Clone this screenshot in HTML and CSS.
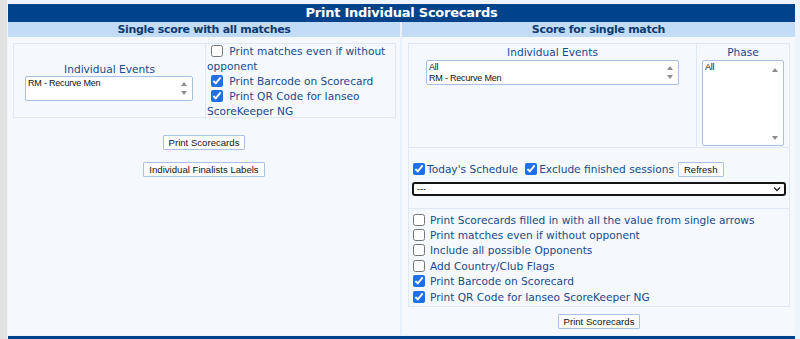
FILE: index.html
```html
<!DOCTYPE html>
<html>
<head>
<meta charset="utf-8">
<title>Print Individual Scorecards</title>
<link rel="stylesheet" href="styles.css">
</head>
<body>
<div class="page">
  <div class="strip"></div>
  <div class="main">
    <div class="title">Print Individual Scorecards</div>
    <div class="cols">
      <div class="col">
        <div class="subhead">Single score with all matches</div>
        <div class="body">
          <div class="box box-left">
            <div class="cell cell-events">
              <div class="lbl">Individual Events</div>
              <div class="listbox lb-left">
                <div class="opt">RM - Recurve Men</div>
                <span class="arr up"></span><span class="arr down"></span>
              </div>
            </div>
            <div class="cell cell-opts">
              <label class="chk"><input type="checkbox"> Print matches even if without opponent</label>
              <label class="chk"><input type="checkbox" checked> Print Barcode on Scorecard</label>
              <label class="chk"><input type="checkbox" checked> Print QR Code for Ianseo ScoreKeeper NG</label>
            </div>
          </div>
          <div class="btnrow first"><button class="btn">Print Scorecards</button></div>
          <div class="btnrow second"><button class="btn">Individual Finalists Labels</button></div>
        </div>
      </div>
      <div class="col">
        <div class="subhead">Score for single match</div>
        <div class="body">
          <div class="box box-right">
            <div class="cell cell-ev2">
              <div class="lbl lbl-top">Individual Events</div>
              <div class="listbox lb-ev2">
                <div class="opt">All</div>
                <div class="opt">RM - Recurve Men</div>
                <span class="arr up"></span><span class="arr down"></span>
              </div>
            </div>
            <div class="cell cell-phase">
              <div class="lbl lbl-top">Phase</div>
              <div class="listbox lb-phase">
                <div class="opt">All</div>
                <span class="arr up"></span><span class="arr down"></span>
              </div>
            </div>
            <div class="cell row-sched">
              <div class="sched-line">
                <label class="chk2"><input type="checkbox" checked>Today's Schedule</label>
                <label class="chk2"><input type="checkbox" checked>Exclude finished sessions</label>
                <button class="btn">Refresh</button>
              </div>
              <div class="dropdown"><span>---</span>
                <svg class="chev" width="8" height="6" viewBox="0 0 8 6"><path d="M1 1.5 L4 4.5 L7 1.5" fill="none" stroke="#222" stroke-width="1.3"/></svg>
              </div>
            </div>
            <div class="cell row-opts">
              <label class="opt-line"><input type="checkbox">Print Scorecards filled in with all the value from single arrows</label>
              <label class="opt-line"><input type="checkbox">Print matches even if without opponent</label>
              <label class="opt-line"><input type="checkbox">Include all possible Opponents</label>
              <label class="opt-line"><input type="checkbox">Add Country/Club Flags</label>
              <label class="opt-line"><input type="checkbox" checked>Print Barcode on Scorecard</label>
              <label class="opt-line"><input type="checkbox" checked>Print QR Code for Ianseo ScoreKeeper NG</label>
            </div>
          </div>
          <div class="btnrow right"><button class="btn">Print Scorecards</button></div>
        </div>
      </div>
    </div>
    <div class="footer-bar"></div>
  </div>
</div>
</body>
</html>
```
FILE: styles.css
```css
html, body {
  margin: 0;
  padding: 0;
}
body {
  background: #eef4fb;
  font-family: "DejaVu Sans", Verdana, sans-serif;
  color: #184a8c;
  height: 339px;
  overflow: hidden;
}
.page {
  display: flex;
  height: 339px;
}
.strip {
  width: 7px;
  flex: none;
  background: #e2e2e2;
  border-right: 1px solid #f1f3f5;
}
.main {
  width: 787px;
  padding-top: 4px;
  display: flex;
  flex-direction: column;
}
.title {
  background: #00438a;
  color: #ffffff;
  font-weight: bold;
  font-size: 13px;
  letter-spacing: -0.25px;
  height: 18px;
  line-height: 18px;
  text-align: center;
}
.cols {
  display: grid;
  grid-template-columns: 392px 393px;
  column-gap: 2px;
  background: #e9f2fc;
}
.col {
  display: flex;
  flex-direction: column;
}
.subhead {
  background: #c2dbf7;
  color: #0c3a70;
  font-weight: bold;
  font-size: 11px;
  letter-spacing: -0.3px;
  height: 15px;
  line-height: 15px;
  text-align: center;
}
.body {
  background: #f5f9fe;
  height: 298px;
  padding: 6px 5px 0 5px;
  box-sizing: border-box;
}
.col + .col .body {
  padding: 6px 5px 0 6px;
}
.box {
  border: 1px solid #dfe9f5;
  display: grid;
}
.box-left {
  grid-template-columns: 191px 1fr;
  height: 75px;
  box-sizing: border-box;
  margin-right: -1px;
}
.cell {
  box-sizing: border-box;
}
.cell-events {
  display: flex;
  flex-direction: column;
  align-items: center;
  justify-content: center;
  padding-top: 0;
}
.lbl {
  font-size: 10.6px;
  line-height: 13px;
}
.cell-opts {
  border-left: 1px solid #dfe9f5;
  font-size: 10.6px;
  line-height: 15px;
  padding: 0 2px 0 1px;
}
.chk {
  display: inline;
}
.chk::after {
  content: "";
  display: block;
}
.chk input, .chk2 input, .opt-line input {
  width: 12px;
  height: 12px;
  margin: 0 3px 0 4px;
  vertical-align: -2px;
  accent-color: #1f6fe8;
}
.listbox {
  position: relative;
  background: #ffffff;
  border: 1px solid #a8c0e2;
  border-radius: 2px;
  box-sizing: border-box;
  font-family: "Liberation Sans", Arial, sans-serif;
  font-size: 9px;
  letter-spacing: -0.2px;
  color: #111;
  padding: 1px 2px;
  line-height: 11px;
}
.lb-left {
  width: 168px;
  height: 25px;
  margin-left: -1px;
}
.arr {
  position: absolute;
  right: 5px;
  width: 0;
  height: 0;
  border-left: 3px solid transparent;
  border-right: 3px solid transparent;
}
.arr.up {
  top: 5px;
  border-bottom: 4px solid #8f8f8f;
}
.arr.down {
  bottom: 5px;
  border-top: 4px solid #8f8f8f;
}
.btnrow {
  display: flex;
  justify-content: center;
}
.btnrow.first {
  margin-top: 17px;
}
.btnrow.second {
  margin-top: 12px;
}
.btnrow.right {
  margin-top: 7px;
}
.btn {
  font-family: "Liberation Sans", Arial, sans-serif;
  font-size: 9.6px;
  color: #111;
  background: #ffffff;
  border: 1px solid #a9c3e8;
  border-radius: 1px;
  padding: 1px 5px;
  line-height: 11px;
  height: 15px;
  margin: 0;
}
.box-right {
  grid-template-columns: 287px 1fr;
}
.cell-ev2 {
  display: flex;
  flex-direction: column;
  align-items: center;
  height: 103px;
  padding-top: 2px;
}
.lbl-top {
  line-height: 13px;
  height: 13px;
}
.lb-ev2 {
  width: 253px;
  height: 25px;
  margin-top: 1px;
}
.cell-phase {
  border-left: 1px solid #dfe9f5;
  display: flex;
  flex-direction: column;
  align-items: center;
  padding-top: 2px;
}
.lb-phase {
  width: 82px;
  height: 86px;
  margin-top: 1px;
}
.lb-phase .arr.up { top: 7px; }
.lb-phase .arr.down { bottom: 5px; }
.row-sched {
  grid-column: 1 / 3;
  border-top: 1px solid #dfe9f5;
  padding: 14px 2px 12px 2px;
}
.sched-line {
  display: flex;
  align-items: center;
  font-size: 10.6px;
  height: 14px;
}
.sched-line .btn {
  margin-left: -1px;
}
.chk2 {
  display: flex;
  align-items: center;
  margin-right: 5px;
}
.chk2 input {
  margin: 0 2px 0 2px;
  vertical-align: 0;
}
.dropdown {
  margin-top: 6px;
  height: 14px;
  border: 2px solid #151515;
  border-radius: 3px;
  background: #ffffff;
  box-sizing: border-box;
  display: flex;
  align-items: center;
  justify-content: space-between;
  padding: 0 3px;
  font-family: "Liberation Sans", Arial, sans-serif;
  font-size: 9px;
  color: #111;
  margin-left: 1px;
  margin-right: 1px;
}
.row-opts {
  grid-column: 1 / 3;
  border-top: 1px solid #dfe9f5;
  padding: 3px 2px 2px 2px;
  display: flex;
  flex-direction: column;
  font-size: 10.6px;
}
.opt-line {
  display: flex;
  align-items: center;
  height: 15.4px;
}
.opt-line input {
  margin: 0 5px 0 2px;
  vertical-align: 0;
}
.footer-bar {
  margin-top: 1px;
  background: #00438a;
  height: 4px;
}
```
